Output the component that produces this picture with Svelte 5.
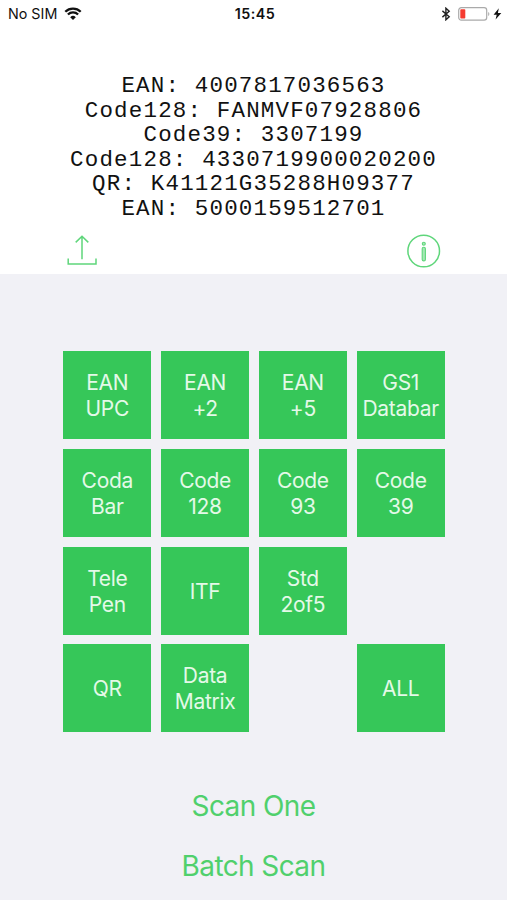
<script lang="ts">
  const results = [
    "EAN: 4007817036563",
    "Code128: FANMVF07928806",
    "Code39: 3307199",
    "Code128: 4330719900020200",
    "QR: K41121G35288H09377",
    "EAN: 5000159512701",
  ];

  // null leaves an empty slot in the grid
  const symbologies: (string[] | null)[] = [
    ["EAN", "UPC"],
    ["EAN", "+2"],
    ["EAN", "+5"],
    ["GS1", "Databar"],
    ["Coda", "Bar"],
    ["Code", "128"],
    ["Code", "93"],
    ["Code", "39"],
    ["Tele", "Pen"],
    ["ITF"],
    ["Std", "2of5"],
    null,
    ["QR"],
    ["Data", "Matrix"],
    null,
    ["ALL"],
  ];
</script>

<div class="screen">
  <header class="output">
    <div class="status">
      <div class="status__left">
        <span>No SIM</span>
        <svg class="wifi" width="18" height="14" viewBox="0 0 18 14" aria-hidden="true">
          <path d="M1.3 4.7a11 11 0 0 1 15.4 0" />
          <path d="M3.9 7.5a7.2 7.2 0 0 1 10.2 0" />
          <path class="wifi__dot" d="M9 13 6.2 10.2a4 4 0 0 1 5.6 0z" />
        </svg>
      </div>
      <span class="status__time">15:45</span>
      <div class="status__right">
        <svg width="10" height="14" viewBox="0 0 10 14" aria-hidden="true">
          <path class="bluetooth" d="M1.4 3.9 8.2 9.8 4.9 12.8V1.2L8.2 4.2 1.4 10.1" />
        </svg>
        <svg class="battery" width="33" height="14" viewBox="0 0 33 14" aria-hidden="true">
          <rect class="battery__case" x="0.7" y="0.7" width="28" height="12.4" rx="2.6" />
          <rect class="battery__level" x="2.3" y="2.3" width="5" height="9.2" rx="0.8" />
          <path class="battery__tip" d="M30.2 5a2.2 2.2 0 0 1 0 3.9z" />
        </svg>
        <svg class="bolt" width="9" height="12" viewBox="0 0 9 12" aria-hidden="true">
          <path d="M5.8 0.3 0.6 6.7H3.7L2.6 11.6 8.3 4.9H4.9z" />
        </svg>
      </div>
    </div>

    <div class="results">
      {#each results as result}
        <div>{result}</div>
      {/each}
    </div>

    <div class="tools">
      <button class="tool" aria-label="Share">
        <svg width="32" height="34" viewBox="0 0 32 34">
          <path d="M16 25.3V2.8M9.7 8.4 16 2.2 22.3 8.4" />
          <path d="M2.2 24.6V30H30V24.6" />
        </svg>
      </button>
      <button class="tool" aria-label="Info">
        <svg width="34" height="34" viewBox="0 0 34 34">
          <circle cx="16.7" cy="17" r="15.8" />
          <circle class="tool__soft" cx="16.8" cy="9.7" r="1.5" />
          <rect class="tool__soft" x="15.2" y="13.3" width="3.2" height="13.6" rx="1.5" />
        </svg>
      </button>
    </div>
  </header>

  <main class="controls">
    <div class="grid">
      {#each symbologies as lines}
        {#if lines}
          <button class="tile">
            {#each lines as line}
              <span>{line}</span>
            {/each}
          </button>
        {:else}
          <div></div>
        {/if}
      {/each}
    </div>

    <div class="actions">
      <button class="action">Scan One</button>
      <button class="action">Batch Scan</button>
    </div>
  </main>
</div>

<style>
  :global(body) {
    margin: 0;
  }

  button {
    border: 0;
    padding: 0;
    background: none;
    font: inherit;
  }

  svg {
    display: block;
  }

  .screen {
    display: flex;
    flex-direction: column;
    width: 507px;
    height: 900px;
    overflow: hidden;
    background: #f1f1f6;
    font-family: Inter, "Liberation Sans", sans-serif;
  }

  .output {
    box-sizing: border-box;
    height: 274px;
    background: #fff;
  }

  .status {
    display: grid;
    grid-template-columns: 1fr auto 1fr;
    align-items: center;
    height: 27px;
    padding: 0 5px 0 8px;
    color: #111;
    font-size: 14.3px;
  }

  .status__left,
  .status__right {
    display: flex;
    align-items: center;
  }

  .status__left {
    gap: 7px;
  }

  .status__right {
    justify-content: flex-end;
  }

  .status__time {
    font-weight: 600;
    letter-spacing: 0.5px;
  }

  .wifi path {
    fill: none;
    stroke: #111;
    stroke-width: 2.3;
  }

  .wifi .wifi__dot {
    fill: #111;
    stroke: none;
  }

  .bluetooth {
    fill: none;
    stroke: #222;
    stroke-width: 1.4;
  }

  .battery {
    margin: 0 2px 0 7px;
  }

  .battery__case {
    fill: none;
    stroke: #aaa;
    stroke-width: 1.2;
  }

  .battery__level {
    fill: #f53b30;
  }

  .battery__tip {
    fill: #aaa;
  }

  .bolt {
    fill: #111;
  }

  .results {
    padding-top: 47px;
    color: #111;
    font-family: "Courier New", "Liberation Mono", monospace;
    font-size: 22.5px;
    letter-spacing: 1.17px;
    line-height: 24.5px;
    text-align: center;
    white-space: pre;
  }

  .tools {
    display: flex;
    justify-content: space-between;
    padding: 13px 66px 0;
  }

  .tool svg {
    fill: none;
    stroke: #5fd67b;
    stroke-width: 1.5;
  }

  .tool .tool__soft {
    fill: #a5e8b5;
    stroke-width: 1.1;
  }

  .controls {
    flex: 1;
    padding-top: 77px;
  }

  .grid {
    display: grid;
    grid-template-columns: repeat(4, 88px);
    grid-auto-rows: 88px;
    gap: 9.8px;
    padding-left: 63.3px;
  }

  .tile {
    display: flex;
    flex-direction: column;
    align-items: center;
    justify-content: center;
    padding-top: 2px;
    background: #36c759;
    color: #e4f9e8;
    font-size: 21px;
    letter-spacing: -0.3px;
    line-height: 26px;
  }

  .actions {
    display: flex;
    flex-direction: column;
    align-items: center;
    gap: 24px;
    margin-top: 56px;
  }

  .action {
    color: #50d06c;
    font-size: 28px;
    letter-spacing: -0.6px;
    line-height: 36px;
  }
</style>
